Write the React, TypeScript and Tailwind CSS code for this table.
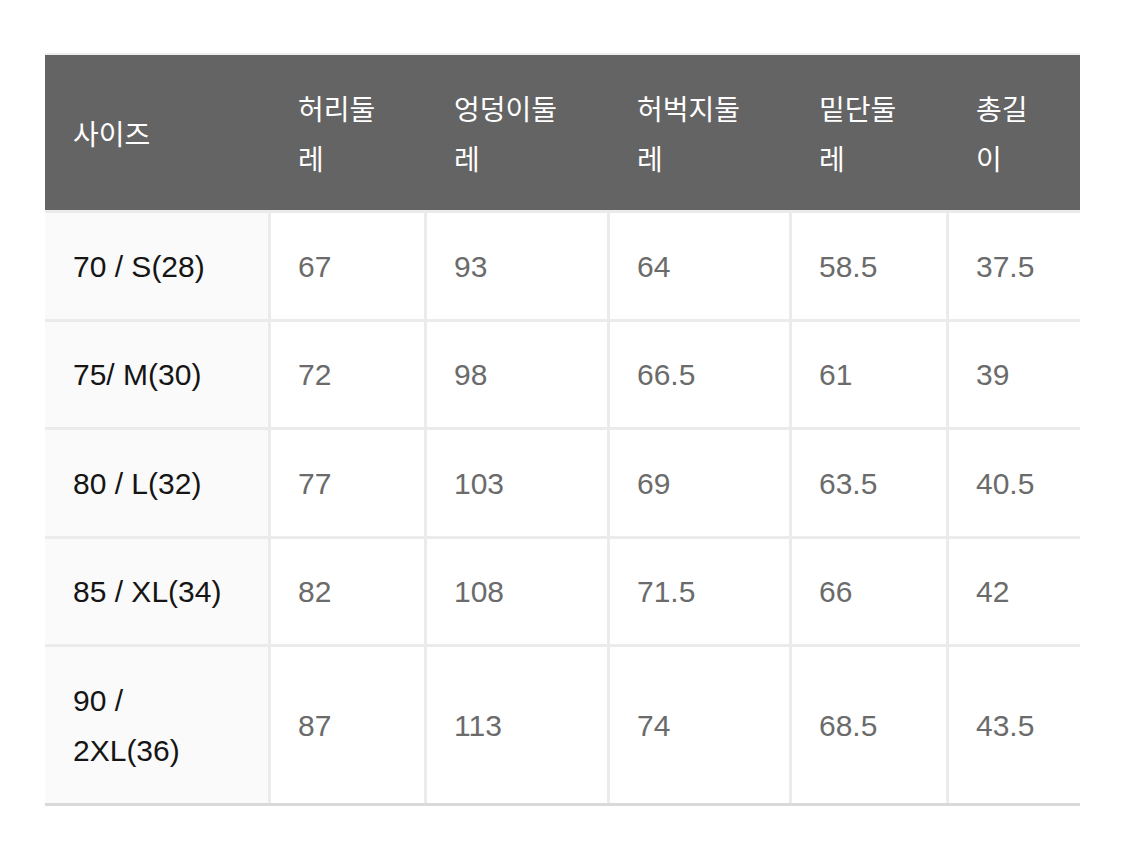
const headers = ["사이즈", "허리둘레", "엉덩이둘레", "허벅지둘레", "밑단둘레", "총길이"];

const rows = [
  ["70 / S(28)", "67", "93", "64", "58.5", "37.5"],
  ["75/ M(30)", "72", "98", "66.5", "61", "39"],
  ["80 / L(32)", "77", "103", "69", "63.5", "40.5"],
  ["85 / XL(34)", "82", "108", "71.5", "66", "42"],
  ["90 / 2XL(36)", "87", "113", "74", "68.5", "43.5"],
];

const cols = "grid grid-cols-[223px_153px_180px_179px_154px_131px] gap-x-[3px]";

export default function App() {
  return (
    <div className="min-h-screen bg-white px-[45px] pt-[53px] font-['Liberation_Sans','Noto_Sans_CJK_KR',sans-serif]">
      <div className="w-[1035px] border-t-2 border-[#eeeeee]">
        {/* header */}
        <div className={`${cols} bg-[#646464]`}>
          {headers.map((h, i) => (
            <div
              key={h}
              className={`flex items-center py-[27.5px] pr-[31px] text-[28px] leading-[50px] text-white break-all font-['Noto_Sans_CJK_KR',sans-serif] ${
                i === 0 ? "pl-[28px]" : "pl-[27px]"
              }`}
            >
              {h}
            </div>
          ))}
        </div>

        {/* body */}
        <div className={`${cols} gap-y-[3px] bg-[#ebebeb] pt-[3px] border-b-[3px] border-[#d9d9d9]`}>
          {rows.map((row) =>
            row.map((cell, i) => (
              <div
                key={row[0] + i}
                className={`flex items-center pt-[28.5px] pb-[27px] text-[30px] leading-[50px] ${
                  i === 0
                    ? "bg-[#fafafa] pl-[28px] pr-[40px] text-[#151515]"
                    : "bg-white pl-[27px] pr-[32px] text-[#6b6b6b]"
                }`}
              >
                {cell}
              </div>
            ))
          )}
        </div>
      </div>
    </div>
  );
}
